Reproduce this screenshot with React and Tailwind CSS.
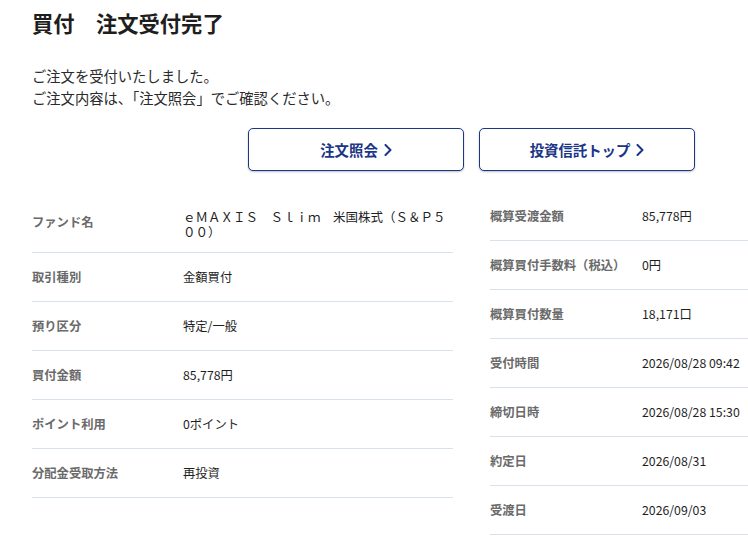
import React from 'react';

const leftRows = [
    { label: 'ファンド名', value: 'ｅＭＡＸＩＳ　Ｓｌｉｍ　米国株式（Ｓ＆Ｐ５００）', fund: true },
    { label: '取引種別', value: '金額買付' },
    { label: '預り区分', value: '特定/一般' },
    { label: '買付金額', value: '85,778円' },
    { label: 'ポイント利用', value: '0ポイント' },
    { label: '分配金受取方法', value: '再投資' },
];

const rightRows = [
    { label: '概算受渡金額', value: '85,778円' },
    { label: '概算買付手数料（税込）', value: '0円' },
    { label: '概算買付数量', value: '18,171口' },
    { label: '受付時間', value: '2026/08/28 09:42' },
    { label: '締切日時', value: '2026/08/28 15:30' },
    { label: '約定日', value: '2026/08/31' },
    { label: '受渡日', value: '2026/09/03' },
];

const Chevron = () => (
    <svg width="8" height="12" viewBox="0 0 8 12" fill="none" className="shrink-0">
        <path d="M1.5 1 L6.5 6 L1.5 11" stroke="currentColor" strokeWidth="2" strokeLinecap="round" strokeLinejoin="round" />
    </svg>
);

const LinkButton = ({ children }) => (
    <button
        type="button"
        className="w-[216px] h-[43px] flex items-center justify-center gap-[6px] rounded-[5px] border-[1.5px] border-[#1b3587] bg-white text-[#1b3587] text-[14.4px] font-bold shadow-[0_1px_2px_rgba(0,0,0,0.25)]"
    >
        {children}
        <Chevron />
    </button>
);

const DetailTable = ({ rows, labelWidth }) => (
    <dl className="w-[421px]">
        {rows.map((row) => (
            <div key={row.label} className="flex items-center py-[15px] border-b border-[#d9e1eb]">
                <dt
                    className="shrink-0 text-[12.3px] leading-[18px] font-bold text-[#6a6a6a]"
                    style={{ width: labelWidth }}
                >
                    {row.label}
                </dt>
                {row.fund ? (
                    <dd className="flex-1 pr-[2px] pt-[2px] -mb-[2px] text-[12.5px] leading-[15px] text-[#222]">{row.value}</dd>
                ) : (
                    <dd className="flex-1 text-[12.3px] leading-[18px] text-[#1e1e1e]">{row.value}</dd>
                )}
            </div>
        ))}
    </dl>
);

const App = () => {
    return (
        <div className="w-screen min-h-screen overflow-hidden bg-white font-['Noto_Sans_CJK_JP','Noto_Sans',sans-serif]">
            <div className="w-[879px] ml-[32px] pt-[7px] pb-[10px]">
                <h1 className="text-[21.3px] leading-[32px] font-bold text-[#1e1e1e]">買付　注文受付完了</h1>

                <div className="mt-[26px] text-[14.3px] leading-[22px] text-[#2a2a2a]">
                    <p>ご注文を受付いたしました。</p>
                    <p>ご注文内容は、「注文照会」でご確認ください。</p>
                </div>

                <div className="mt-[19px] flex justify-center gap-[15px]">
                    <LinkButton>注文照会</LinkButton>
                    <LinkButton>投資信託トップ</LinkButton>
                </div>

                <div className="mt-[21px] flex gap-[37px] items-start">
                    <DetailTable rows={leftRows} labelWidth={151} />
                    <DetailTable rows={rightRows} labelWidth={152} />
                </div>
            </div>
        </div>
    );
};

export default App;
